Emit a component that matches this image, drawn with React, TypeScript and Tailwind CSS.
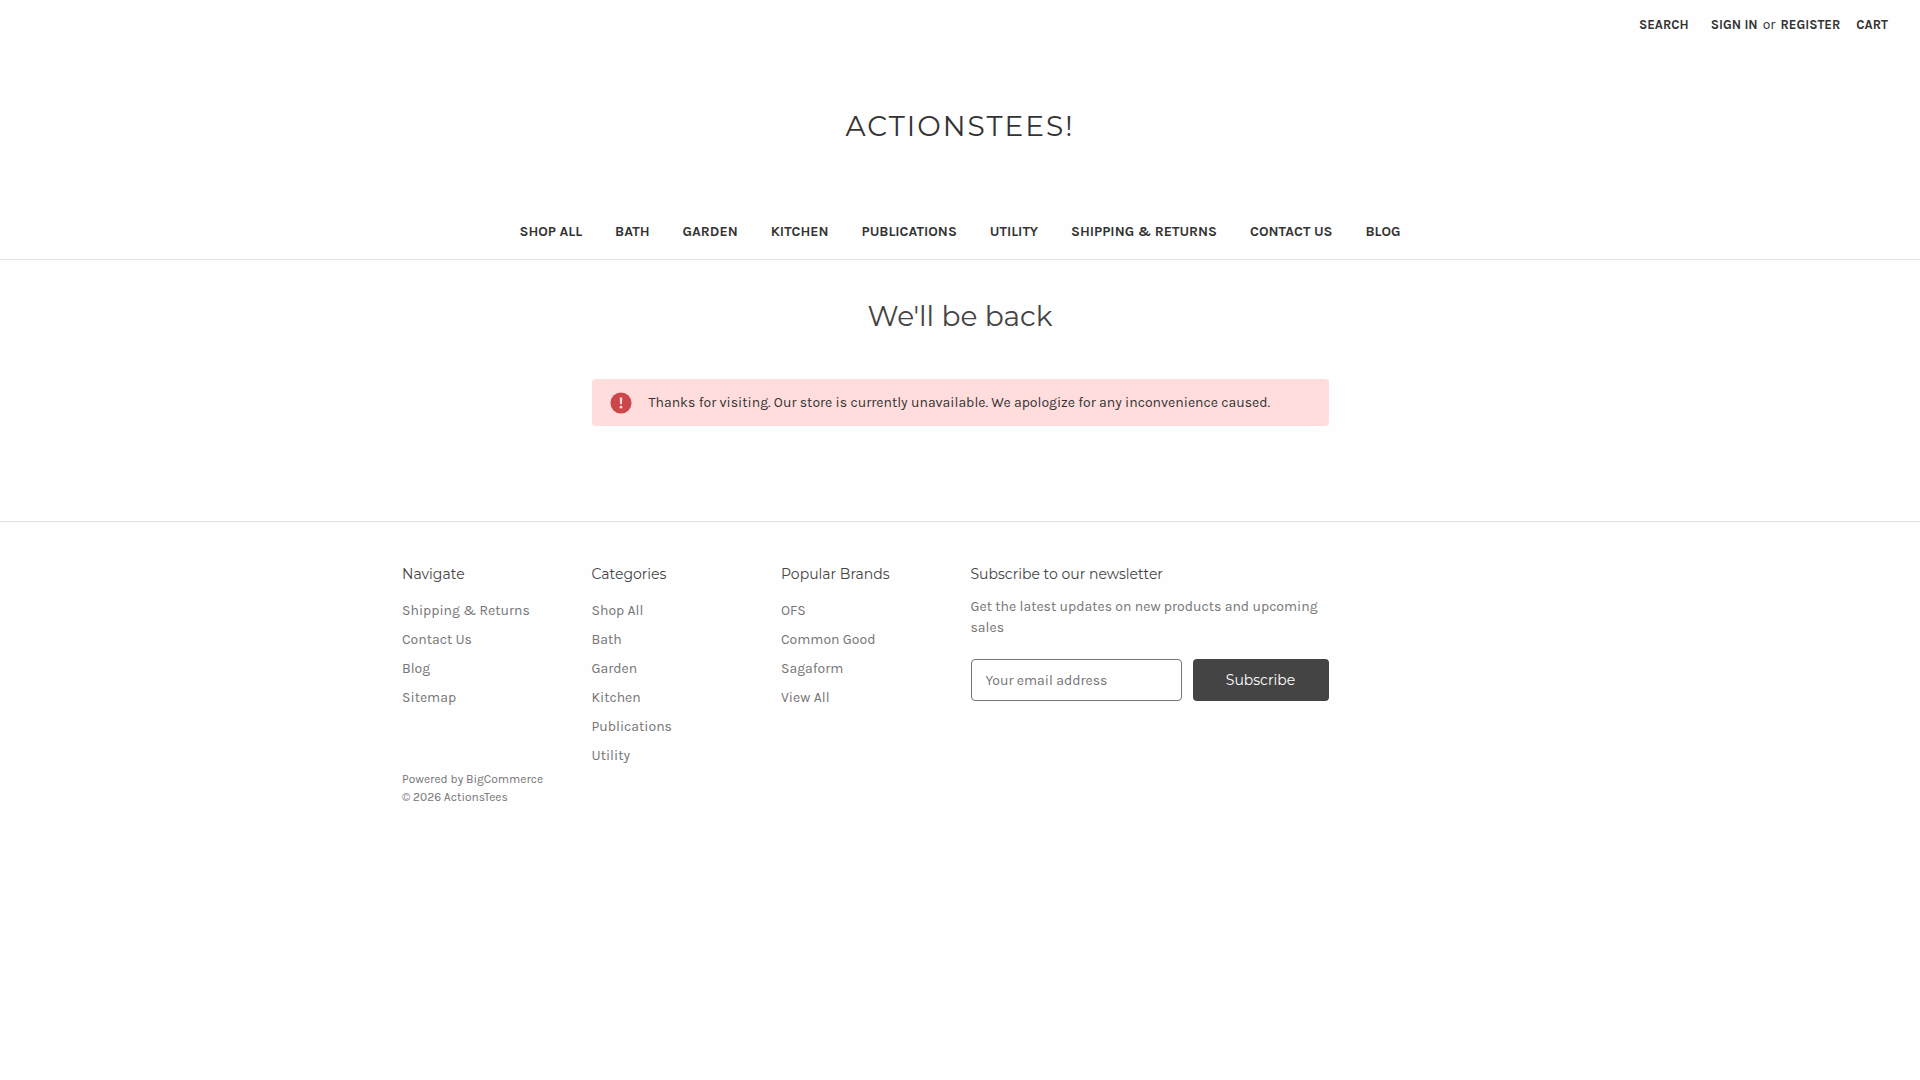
import { useState } from "react";

const navLinks = [
  "Shop All",
  "Bath",
  "Garden",
  "Kitchen",
  "Publications",
  "Utility",
  "Shipping & Returns",
  "Contact Us",
  "Blog",
];

const footerColumns = [
  { title: "Navigate", links: ["Shipping & Returns", "Contact Us", "Blog", "Sitemap"] },
  {
    title: "Categories",
    links: ["Shop All", "Bath", "Garden", "Kitchen", "Publications", "Utility"],
  },
  { title: "Popular Brands", links: ["OFS", "Common Good", "Sagaform", "View All"] },
];

const displayFont = "font-[Montserrat,Inter,sans-serif]";

function TopBar() {
  return (
    <nav
      aria-label="Account"
      className="flex h-[50px] items-center justify-end pr-8 text-[13px] font-bold uppercase"
    >
      <a href="#search" className="mr-[22px]">Search</a>
      <a href="#login">Sign in</a>
      <span className="mx-[5px] text-sm font-normal lowercase">or</span>
      <a href="#register">Register</a>
      <a href="#cart" className="ml-4">Cart</a>
    </nav>
  );
}

function Header() {
  return (
    <header className="border-b border-[#e5e5e5] text-[#333]">
      <TopBar />
      <div className="flex h-[152px] items-center justify-center">
        <a href="#home" className={`${displayFont} text-[28px] tracking-[2px]`}>
          ACTIONSTEES!
        </a>
      </div>
      <nav
        aria-label="Main"
        className="flex flex-wrap items-center justify-center gap-x-[33px] pt-5 pb-[17px]"
      >
        {navLinks.map((label) => (
          <a key={label} href="#" className="text-sm font-bold uppercase">
            {label}
          </a>
        ))}
      </nav>
    </header>
  );
}

function Alert() {
  return (
    <div
      role="alert"
      className="flex min-h-[47px] items-center gap-[17px] rounded-[4px] bg-[#ffdddd] px-[18px] py-3 text-sm text-[#333]"
    >
      <svg viewBox="0 0 24 24" className="size-[22px] shrink-0" aria-hidden="true">
        <circle cx="12" cy="12" r="11.5" fill="#cc4749" />
        <path d="M10.6 6h2.8l-.4 7.4h-2z" fill="#ffdddd" />
        <circle cx="12" cy="16.6" r="1.5" fill="#ffdddd" />
      </svg>
      <p>
        Thanks for visiting. Our store is currently unavailable. We apologize for any inconvenience
        caused.
      </p>
    </div>
  );
}

function Newsletter() {
  const [email, setEmail] = useState("");

  return (
    <div className="col-span-12 lg:col-span-4">
      <h2 className={`${displayFont} text-sm leading-6 text-[#444]`}>
        Subscribe to our newsletter
      </h2>
      <p className="mt-[10px] leading-[21px]">
        Get the latest updates on new products and upcoming sales
      </p>
      <form className="mt-[21px] flex gap-[11px]" onSubmit={(e) => e.preventDefault()}>
        <input
          type="email"
          aria-label="Email Address"
          value={email}
          onChange={(e) => setEmail(e.target.value)}
          placeholder="Your email address"
          className="h-[42px] min-w-0 flex-1 rounded-[4px] border border-[#757575] px-3.5 text-sm text-[#333] placeholder:text-[#757575]"
        />
        <button
          type="submit"
          className={`${displayFont} h-[42px] w-[136px] rounded-[4px] bg-[#444] text-sm text-white`}
        >
          Subscribe
        </button>
      </form>
    </div>
  );
}

function Footer() {
  return (
    <footer className="border-t border-[#e0e0e0] px-5 pt-10 pb-8 text-sm text-[#757575]">
      <div className="mx-auto max-w-[1116px]">
        <div className="grid grid-cols-12 gap-x-[21px] gap-y-8">
          {footerColumns.map((col) => (
            <nav key={col.title} aria-label={col.title} className="col-span-4 lg:col-span-2">
              <h2 className={`${displayFont} text-sm leading-6 text-[#444]`}>{col.title}</h2>
              <ul className="mt-[10px]">
                {col.links.map((link) => (
                  <li key={link} className="leading-[29px]">
                    <a href="#">{link}</a>
                  </li>
                ))}
              </ul>
            </nav>
          ))}
          <Newsletter />
        </div>
        <div className="text-xs leading-[18px]">
          <p>
            Powered by <a href="#">BigCommerce</a>
          </p>
          <p>© 2026 ActionsTees</p>
        </div>
      </div>
    </footer>
  );
}

export default function App() {
  return (
    <div className="min-h-screen bg-[#fefefe] font-[Karla,Roboto,sans-serif]">
      <Header />
      <main className="px-5 pt-9 pb-[95px]">
        <h1 className={`${displayFont} text-center text-[28px] leading-10 text-[#444]`}>
          We'll be back
        </h1>
        <div className="mx-auto mt-[43px] grid max-w-[1116px] grid-cols-12 gap-x-[21px]">
          <div className="col-span-12 lg:col-span-8 lg:col-start-3">
            <Alert />
          </div>
        </div>
      </main>
      <Footer />
    </div>
  );
}
